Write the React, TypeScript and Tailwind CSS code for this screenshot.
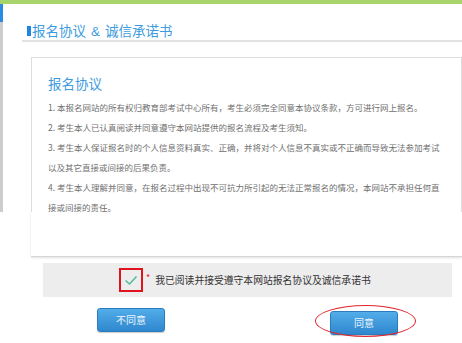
import React from 'react';

const lines: string[][] = [
  ['1. 本报名网站的所有权归教育部考试中心所有，考生必须完全同意本协议条款，方可进行网上报名。'],
  ['2. 考生本人已认真阅读并同意遵守本网站提供的报名流程及考生须知。'],
  ['3. 考生本人保证报名时的个人信息资料真实、正确，并将对个人信息不真实或不正确而导致无法参加考试', '以及其它直接或间接的后果负责。'],
  ['4. 考生本人理解并同意，在报名过程中出现不可抗力所引起的无法正常报名的情况，本网站不承担任何直', '接或间接的责任。'],
];

const btnClass =
  'w-[68px] h-[24px] rounded-[3px] border border-[#2b7cbd] bg-gradient-to-b from-[#52ade9] to-[#2f87ce] text-[#eef6fd] text-[10px] leading-[22px] shadow-[0_1px_1px_rgba(0,0,0,0.2)]';

export default function App() {
  return (
    <div className="w-[462px] h-[343px] bg-white overflow-hidden font-['Noto_Sans_CJK_SC',sans-serif]">
      <div className="h-[4px] bg-[#a8d46c]" />

      <div className="flex">
        {/* left edge of the outer frame */}
        <div className="w-[3px] flex flex-col">
          <div className="h-[18px] bg-[#2b8be0]" />
          <div className="flex-1 bg-[#cdcdcd]" />
        </div>

        <div className="flex-1 flex flex-col">
          <div className="ml-[19px] h-[38px] border-b-2 border-[#e2e2e2] flex items-end pl-[5px]">
            <div className="flex items-center h-[18px] gap-[1px]">
              <span className="w-[4px] h-[10px] bg-[#1e86e2]" />
              <span className="text-[13.5px] leading-[18px] text-[#3d9be0]">
                报名协议<span className="mx-[5px] font-['Liberation_Sans',sans-serif]">&amp;</span>诚信承诺书
              </span>
            </div>
          </div>

          <div className="ml-[28px] mt-[15px] h-[155px] border-t border-l border-r border-[#dddddd] pl-[16px] pt-[17px]">
            <div className="text-[13.5px] leading-[16px] text-[#3d9be0]">报名协议</div>
            <div className="mt-[6px] text-[8.5px] leading-[20px] text-[#707070]">
              {lines.map((p, i) => (
                <div key={i}>
                  {p.map((l, j) => (
                    <div key={j} className="whitespace-nowrap">{l}</div>
                  ))}
                </div>
              ))}
            </div>
          </div>
        </div>
      </div>

      <div className="ml-[31px] h-[45px] border-b border-[#d6d6d6] shadow-[0_1px_2px_rgba(0,0,0,0.12)]" />

      <div className="ml-[43px] mt-[6px] w-[409px] h-[34px] bg-[#ededed] flex items-center pl-[76px]">
        <div className="w-[24px] h-[24px] border-[2.5px] border-[#e0141e]">
          <svg width="19" height="19" viewBox="0 0 19 19">
            <path d="M4.5 10.5 L8.5 14 L15.5 6.5" fill="none" stroke="#52b99c" strokeWidth="1.5" />
          </svg>
        </div>
        <span className="ml-[3px] self-start mt-[10px] text-[9px] leading-[9px] text-[#e0141e]">*</span>
        <span className="ml-[5px] text-[9.8px] text-[#333333]">我已阅读并接受遵守本网站报名协议及诚信承诺书</span>
      </div>

      <div className="mt-[11px] flex pl-[97px]">
        <button className={btnClass}>不同意</button>
        <div className="relative ml-[165px]">
          <button className={btnClass}>同意</button>
          <div className="absolute left-[-15px] top-[-3px] w-[101px] h-[32px] rounded-[50%] border-[1.5px] border-[#e0262e]" />
        </div>
      </div>
    </div>
  );
}
